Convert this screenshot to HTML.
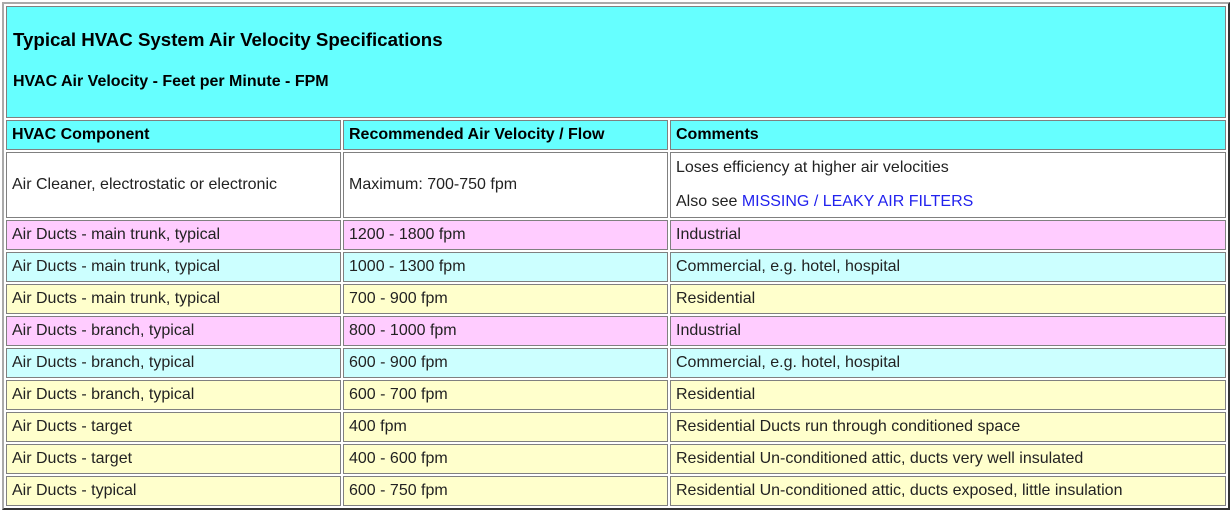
<!DOCTYPE html>
<html><head><style>
body{margin:0;background:#fff;font-family:"Liberation Sans",Arial,sans-serif;}
table{position:absolute;left:2px;top:2px;width:1228px;border-collapse:separate;border-spacing:2px;border:2px solid;border-color:#aaa #333 #333 #aaa;table-layout:fixed;}
td{border:1px solid #808080;padding:0 5px;font-size:16px;color:#222;height:30px;box-sizing:border-box;overflow:hidden;white-space:nowrap;}
tr.r td{height:30px;}
.t{background:#66ffff;height:112px;vertical-align:top;padding:22px 6px 0;}
.t h1{font-size:18.7px;margin:0 0 22px;color:#000;}
.t h2{font-size:16px;margin:0;color:#000;}
.h td{background:#66ffff;font-weight:bold;color:#000;height:30px;}
.w td{background:#fff;height:66px;}
.p td{background:#ffccff}.c td{background:#ccffff}.y td{background:#ffffcc}
a{color:#2222ee;text-decoration:none}
</style></head><body>
<table>
<colgroup><col style="width:335px"><col style="width:325px"><col></colgroup>
<tr><td colspan="3" class="t"><h1>Typical HVAC System Air Velocity Specifications</h1><h2>HVAC Air Velocity - Feet per Minute - FPM</h2></td></tr>
<tr class="h"><td>HVAC Component</td><td>Recommended Air Velocity / Flow</td><td>Comments</td></tr>
<tr class="w"><td>Air Cleaner, electrostatic or electronic</td><td>Maximum: 700-750 fpm</td><td><div style="margin-bottom:16px">Loses efficiency at higher air velocities</div><div>Also see <a>MISSING / LEAKY AIR FILTERS</a></div></td></tr>
<tr class="r p"><td>Air Ducts - main trunk, typical</td><td>1200 - 1800 fpm</td><td>Industrial</td></tr>
<tr class="r c"><td>Air Ducts - main trunk, typical</td><td>1000 - 1300 fpm</td><td>Commercial, e.g. hotel, hospital</td></tr>
<tr class="r y"><td>Air Ducts - main trunk, typical</td><td>700 - 900 fpm</td><td>Residential</td></tr>
<tr class="r p"><td>Air Ducts - branch, typical</td><td>800 - 1000 fpm</td><td>Industrial</td></tr>
<tr class="r c"><td>Air Ducts - branch, typical</td><td>600 - 900 fpm</td><td>Commercial, e.g. hotel, hospital</td></tr>
<tr class="r y"><td>Air Ducts - branch, typical</td><td>600 - 700 fpm</td><td>Residential</td></tr>
<tr class="r y"><td>Air Ducts - target</td><td>400 fpm</td><td>Residential Ducts run through conditioned space</td></tr>
<tr class="r y"><td>Air Ducts - target</td><td>400 - 600 fpm</td><td>Residential Un-conditioned attic, ducts very well insulated</td></tr>
<tr class="r y"><td>Air Ducts - typical</td><td>600 - 750 fpm</td><td>Residential Un-conditioned attic, ducts exposed, little insulation</td></tr>
</table>
</body></html>
